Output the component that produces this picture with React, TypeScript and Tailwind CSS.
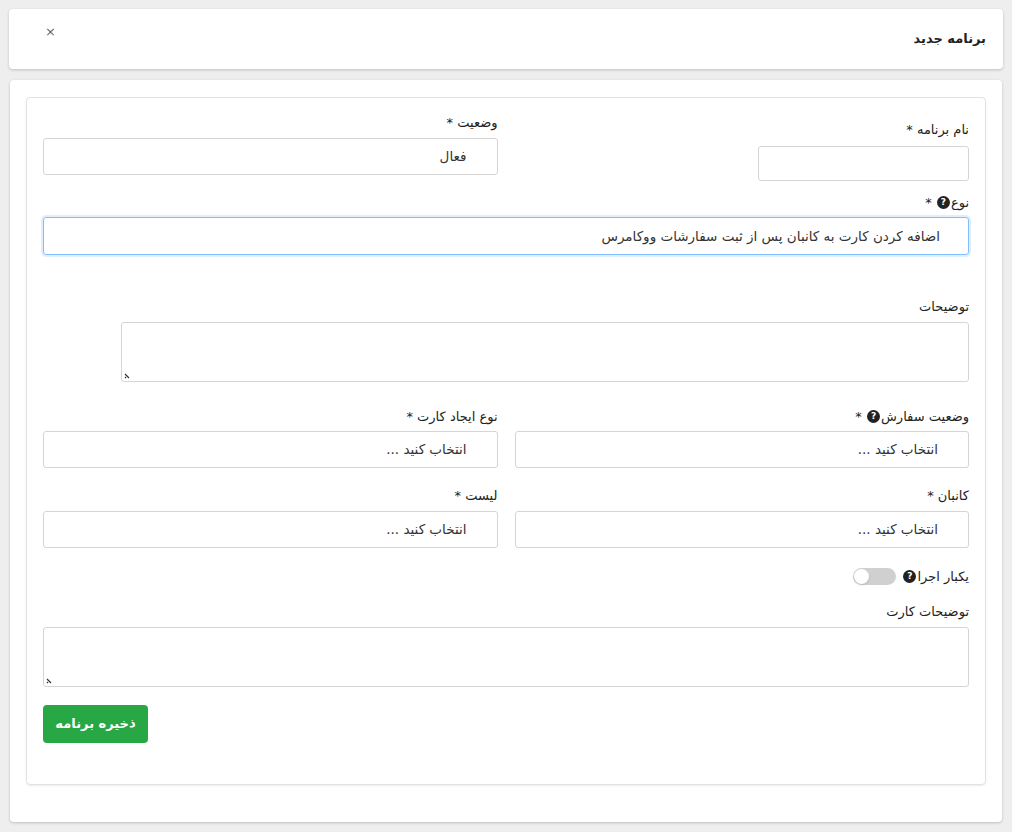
import React from "react";

const Q = () => (
  <span className="inline-flex items-center justify-center w-[13px] h-[13px] rounded-full bg-[#222] text-white text-[9px] font-bold leading-none mx-[1px]">?</span>
);

const Sel = ({ text }: { text: string }) => (
  <div className="h-[37px] border border-[#d5d5d5] rounded-[3px] bg-white flex items-center pr-[30px] text-[13.5px] text-[#333]">{text}</div>
);

const Grip = () => (
  <svg className="absolute left-[2px] bottom-[2px]" width="8" height="8" viewBox="0 0 8 8">
    <path d="M1 3 L5 7 M1 6 L2 7" stroke="#333" strokeWidth="1.2" />
  </svg>
);

export default function App() {
  return (
    <div dir="rtl" className="w-[1012px] h-[832px] bg-[#eeeeee] pt-[9px] text-[#222]" style={{ fontFamily: '"DejaVu Sans", "Noto Sans", sans-serif' }}>
      <div className="mx-[9px] h-[60px] bg-white rounded-[4px] shadow-[0_1px_3px_rgba(0,0,0,0.2)] flex items-center justify-between px-[17px]">
        <span className="text-[13px] font-bold">برنامه جدید</span>
        <span className="text-[13px] text-[#666] ml-[19px] -mt-[14px]">×</span>
      </div>
      <div className="mx-[10px] mt-[11px] h-[742px] bg-white rounded-[4px] shadow-[0_1px_3px_rgba(0,0,0,0.2)] pt-[17px] px-[16px]">
        <div className="h-[688px] border border-[#e2e2e2] rounded-[4px] shadow-[0_1px_2px_rgba(0,0,0,0.08)] px-[16px] pt-[15px]">
          <div className="grid grid-cols-2 gap-x-[17px]">
            <div>
              <div className="text-[13px] mt-[7px] mb-[6px]">نام برنامه *</div>
              <div className="w-[211px] h-[35px] border border-[#d5d5d5] rounded-[3px]" />
            </div>
            <div>
              <div className="text-[13px] mb-[5px]">وضعیت *</div>
              <Sel text="فعال" />
            </div>
          </div>
          <div className="text-[13px] mt-[12px] mb-[5px] flex items-center">نوع<Q />&nbsp;*</div>
          <div className="h-[38px] border border-[#80bdff] rounded-[3px] shadow-[0_0_0_2px_rgba(0,123,255,0.12)] flex items-center pr-[28px] text-[13.5px] text-[#333]">اضافه کردن کارت به کانبان پس از ثبت سفارشات ووکامرس</div>
          <div className="text-[13px] mt-[42px] mb-[5px]">توضیحات</div>
          <div className="relative w-[848px] h-[60px] border border-[#d5d5d5] rounded-[3px]"><Grip /></div>
          <div className="grid grid-cols-2 gap-x-[17px] mt-[25px]">
            <div>
              <div className="text-[13px] mb-[5px] flex items-center">وضعیت سفارش<Q />&nbsp;*</div>
              <Sel text="انتخاب کنید ..." />
            </div>
            <div>
              <div className="text-[13px] mb-[5px]">نوع ایجاد کارت *</div>
              <Sel text="انتخاب کنید ..." />
            </div>
            <div className="mt-[18px]">
              <div className="text-[13px] mb-[5px]">کانبان *</div>
              <Sel text="انتخاب کنید ..." />
            </div>
            <div className="mt-[18px]">
              <div className="text-[13px] mb-[5px]">لیست *</div>
              <Sel text="انتخاب کنید ..." />
            </div>
          </div>
          <div className="flex items-center mt-[19px] text-[13px]">
            یکبار اجرا<Q />
            <div className="w-[43px] h-[17px] rounded-full bg-[#d0d0d0] mr-[6px] relative">
              <div className="absolute left-[1px] top-[1px] w-[15px] h-[15px] rounded-full bg-white shadow" />
            </div>
          </div>
          <div className="text-[13px] mt-[16px] mb-[5px]">توضیحات کارت</div>
          <div className="relative h-[60px] border border-[#d5d5d5] rounded-[3px]"><Grip /></div>
          <div className="flex justify-end mt-[18px]">
            <button className="w-[105px] h-[38px] bg-[#28a745] rounded-[4px] text-white text-[13px] font-bold">ذخیره برنامه</button>
          </div>
        </div>
      </div>
    </div>
  );
}
